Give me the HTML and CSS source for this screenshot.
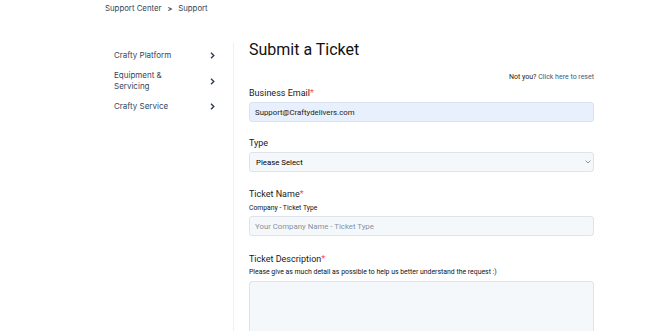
FILE: index.html
```html
<!DOCTYPE html>
<html lang="en">
<head>
<meta charset="utf-8">
<title>Submit a Ticket</title>
<link rel="stylesheet" href="styles.css">
</head>
<body>
<div class="crumbs">
  <span>Support Center</span>
  <span class="sep">&gt;</span>
  <span>Support</span>
</div>
<div class="layout">
  <aside class="side">
    <nav class="side-nav">
      <a class="side-item" href="#"><span>Crafty Platform</span><svg class="chev" viewBox="0 0 5 7" width="5" height="7"><path d="M1 0.8 L3.8 3.5 L1 6.2" fill="none" stroke="#2d3e50" stroke-width="1.4"/></svg></a>
      <a class="side-item" href="#"><span>Equipment &amp;<br>Servicing</span><svg class="chev" viewBox="0 0 5 7" width="5" height="7"><path d="M1 0.8 L3.8 3.5 L1 6.2" fill="none" stroke="#2d3e50" stroke-width="1.4"/></svg></a>
      <a class="side-item" href="#"><span>Crafty Service</span><svg class="chev" viewBox="0 0 5 7" width="5" height="7"><path d="M1 0.8 L3.8 3.5 L1 6.2" fill="none" stroke="#2d3e50" stroke-width="1.4"/></svg></a>
    </nav>
  </aside>
  <main class="main">
    <h1 class="title">Submit a Ticket</h1>
    <div class="notyou">Not you? <a href="#">Click here to reset</a></div>

    <div class="field">
      <label class="lbl">Business Email<span class="req">*</span></label>
      <input class="ctl email" type="text" value="Support@Craftydelivers.com">
    </div>

    <div class="field">
      <label class="lbl">Type</label>
      <div class="select-wrap">
        <select class="ctl sel"><option>Please Select</option></select>
        <svg class="sel-chev" viewBox="0 0 6 4" width="6" height="4"><path d="M0.6 0.6 L3 3 L5.4 0.6" fill="none" stroke="#7c8a99" stroke-width="0.9"/></svg>
      </div>
    </div>

    <div class="field field-name">
      <label class="lbl">Ticket Name<span class="req">*</span></label>
      <div class="help">Company - Ticket Type</div>
      <input class="ctl" type="text" placeholder="Your Company Name - Ticket Type">
    </div>

    <div class="field field-last">
      <label class="lbl">Ticket Description<span class="req">*</span></label>
      <div class="help help2">Please give as much detail as possible to help us better understand the request :)</div>
      <textarea class="ctl area"></textarea>
    </div>
  </main>
</div>
</body>
</html>
```

FILE: styles.css
```css
* { box-sizing: border-box; }
html, body { margin: 0; padding: 0; background: #ffffff; }
body {
  font-family: Roboto, "Liberation Sans", Arial, sans-serif;
  color: #1f1f1f;
  width: 670px;
  height: 331px;
  overflow: hidden;
}

.crumbs {
  display: flex;
  align-items: center;
  gap: 5px;
  padding: 3px 0 0 105px;
  height: 14px;
  font-family: Inter, "Noto Sans", sans-serif;
  font-size: 7.8px;
  line-height: 11px;
  color: #33475b;
}
.crumbs > span { display: block; }
.crumbs .sep { font-size: 7px; font-weight: 700; padding: 0 1px; }

.layout {
  display: flex;
  align-items: stretch;
  margin-top: 25px;
  padding-left: 105px;
  min-height: 292px;
}

.side {
  width: 129px;
  flex: 0 0 129px;
  padding-top: 4px;
  display: flex;
}
.side-nav {
  flex: 1;
  border-right: 1px solid #eef1f4;
  display: flex;
  flex-direction: column;
  padding-top: 1px;
}
.side-item {
  display: flex;
  align-items: center;
  justify-content: space-between;
  padding: 4.6px 18px 4.6px 9px;
  font-family: Inter, "Noto Sans", sans-serif;
  font-size: 8px;
  line-height: 11px;
  color: #33475b;
  text-decoration: none;
}
.side-item:first-child { padding-top: 6px; }
.chev { display: block; flex: none; }

.main {
  width: 360px;
  padding-left: 15px;
}
.title {
  margin: 1px 0 0;
  font-size: 16px;
  line-height: 20px;
  font-weight: 400;
  color: #111;
}
.notyou {
  margin-top: 12px;
  text-align: right;
  font-size: 7px;
  line-height: 10px;
  color: #222;
}
.notyou a { color: #425b76; text-decoration: none; }

.field { margin-top: 5px; }
.field + .field { margin-top: 15px; }
.field + .field-name { margin-top: 16px; }
.field + .field-last { margin-top: 17px; }

.lbl {
  display: block;
  font-size: 9px;
  line-height: 12px;
  color: #1a1a1a;
  margin-bottom: 3px;
}
.req { color: #f2545b; }

.help {
  font-size: 6.8px;
  line-height: 10px;
  color: #111;
  margin-top: 2px;
  margin-bottom: 3px;
}
.help2 { font-size: 6.9px; margin-top: -1px; margin-bottom: 4px; }

.ctl {
  display: block;
  width: 345px;
  height: 20px;
  margin: 0;
  padding: 0 5px;
  border: 1px solid #dde3ea;
  border-radius: 3px;
  background: #f5f8fa;
  font-family: Roboto, "Liberation Sans", Arial, sans-serif;
  font-size: 7.8px;
  color: #222;
  outline: none;
}
.ctl::placeholder { color: #8592a1; }
.email { background: #e8f0fe; border-color: #d8e2f0; }

.select-wrap { position: relative; width: 345px; }
.sel {
  -webkit-appearance: none;
  appearance: none;
  padding-left: 6px;
  color: #000;
  font-weight: 400;
}
.sel-chev {
  position: absolute;
  right: 3px;
  top: 8px;
}

.area {
  height: 60px;
  resize: none;
  padding: 5px;
}
```
